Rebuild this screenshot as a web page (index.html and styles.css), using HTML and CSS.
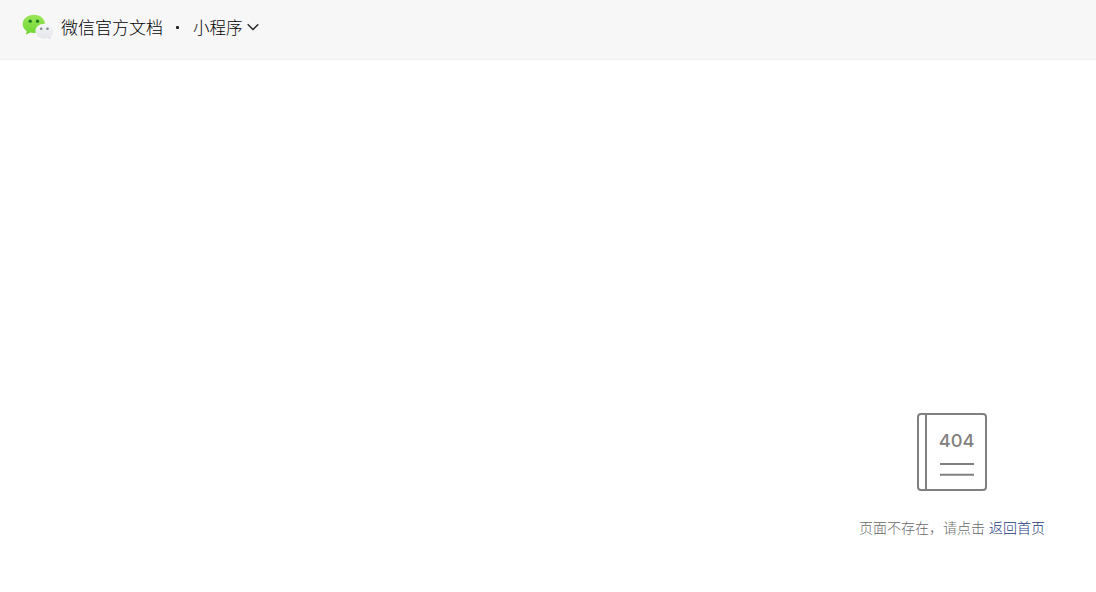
FILE: index.html
```
<!DOCTYPE html>
<html lang="zh-CN">
<head>
  <meta charset="UTF-8" />
  <meta name="viewport" content="width=device-width, initial-scale=1.0">
  <title>微信官方文档</title>
  <link rel="stylesheet" href="styles.css">
</head>
<body>
  <header class="navbar">
    <svg class="logo" width="32" height="28" viewBox="0 0 32 28">
      <defs>
        <linearGradient id="green" x1="0" y1="0" x2="0" y2="1">
          <stop offset="0" stop-color="#9be75a" />
          <stop offset="1" stop-color="#6fd52f" />
        </linearGradient>
        <linearGradient id="white" x1="0" y1="0" x2="0" y2="1">
          <stop offset="0" stop-color="#f5f6f8" />
          <stop offset="1" stop-color="#e2e4e9" />
        </linearGradient>
      </defs>
      <path fill="url(#green)" d="M12 1.700C5.800 1.700.7 5.700.7 11c0 3 1.600 5.500 4.100 7.200L3.900 21.700l4.300-2.100c1.200.3 2.400.4 3.800.4 6.200 0 11-4 11-9s-4.800-9.300-11-9.300z" />
      <path fill="url(#white)" d="M22.300 10.700c-5 0-8.900 3.200-8.900 7.300s3.900 7.400 8.900 7.400c1.100 0 2.200-.2 3.200-.5l3.500 1.700-.8-2.900c1.900-1.400 3.100-3.400 3.100-5.700 0-4.100-4-7.300-9-7.300z" />
      <circle cx="8.200" cy="8.200" r="1.600" fill="#187a20" />
      <circle cx="15.500" cy="8.200" r="1.600" fill="#187a20" />
      <circle cx="19.200" cy="15.700" r="1.300" fill="#858b91" />
      <circle cx="25.500" cy="15.700" r="1.300" fill="#858b91" />
    </svg>
    <a class="site-name">微信官方文档</a>
    <span class="dot"></span>
    <a class="product">小程序</a>
    <svg class="arrow" width="12" height="8" viewBox="0 0 12 8">
      <path d="M.7 1.200L6 6.500l5.300-5.300" fill="none" stroke="#222" stroke-width="1.300" />
    </svg>
  </header>

  <main class="not-found">
    <svg class="book" width="70" height="78" viewBox="0 0 70 78">
      <g fill="none" stroke="#808080" stroke-width="2">
        <rect x="1" y="1" width="68" height="76" rx="3" />
        <path d="M9 1v76M23 51h34M23 61.700h34" />
      </g>
      <text class="code" x="21.800" y="34" textLength="35.800" lengthAdjust="spacingAndGlyphs">404</text>
    </svg>
    <p class="tip">页面不存在，请点击 <a class="home-link">返回首页</a></p>
  </main>
</body>
</html>
```
FILE: styles.css
```
body {
  margin: 0;
  height: 100vh;
  overflow: hidden;
  display: flex;
  flex-direction: column;
  background: #fff;
  font-family: "Noto Sans CJK SC", sans-serif;
}

.navbar {
  box-sizing: border-box;
  flex: none;
  display: flex;
  align-items: center;
  height: 60px;
  padding: 0 22px 6px;
  background: #f7f7f7;
  border-bottom: 1px solid #f0f0f0;
  color: #000;
  font-weight: 300;
}
.logo {
  flex: none;
}
.site-name {
  margin-left: 7px;
  font-size: 17px;
}
.dot {
  width: 3px;
  height: 3px;
  margin: 2px 14px 0 13px;
  border-radius: 1px;
  background: #222;
}
.product {
  font-size: 16.5px;
}
.arrow {
  margin-left: 4px;
}

/* 404 */
.not-found {
  flex: 1;
  display: flex;
  flex-direction: column;
  align-items: center;
  align-self: flex-end;
  padding: 353px 51px 0 0;
}
.code {
  fill: #808080;
  font-family: Inter, sans-serif;
  font-size: 17.3px;
  font-weight: 500;
}
.tip {
  margin: 26px 0 0;
  color: #6a6a6a;
  font-size: 14px;
  font-weight: 300;
  line-height: 20px;
  white-space: nowrap;
  word-spacing: 1px;
}
.home-link {
  color: #233a80;
}
```
